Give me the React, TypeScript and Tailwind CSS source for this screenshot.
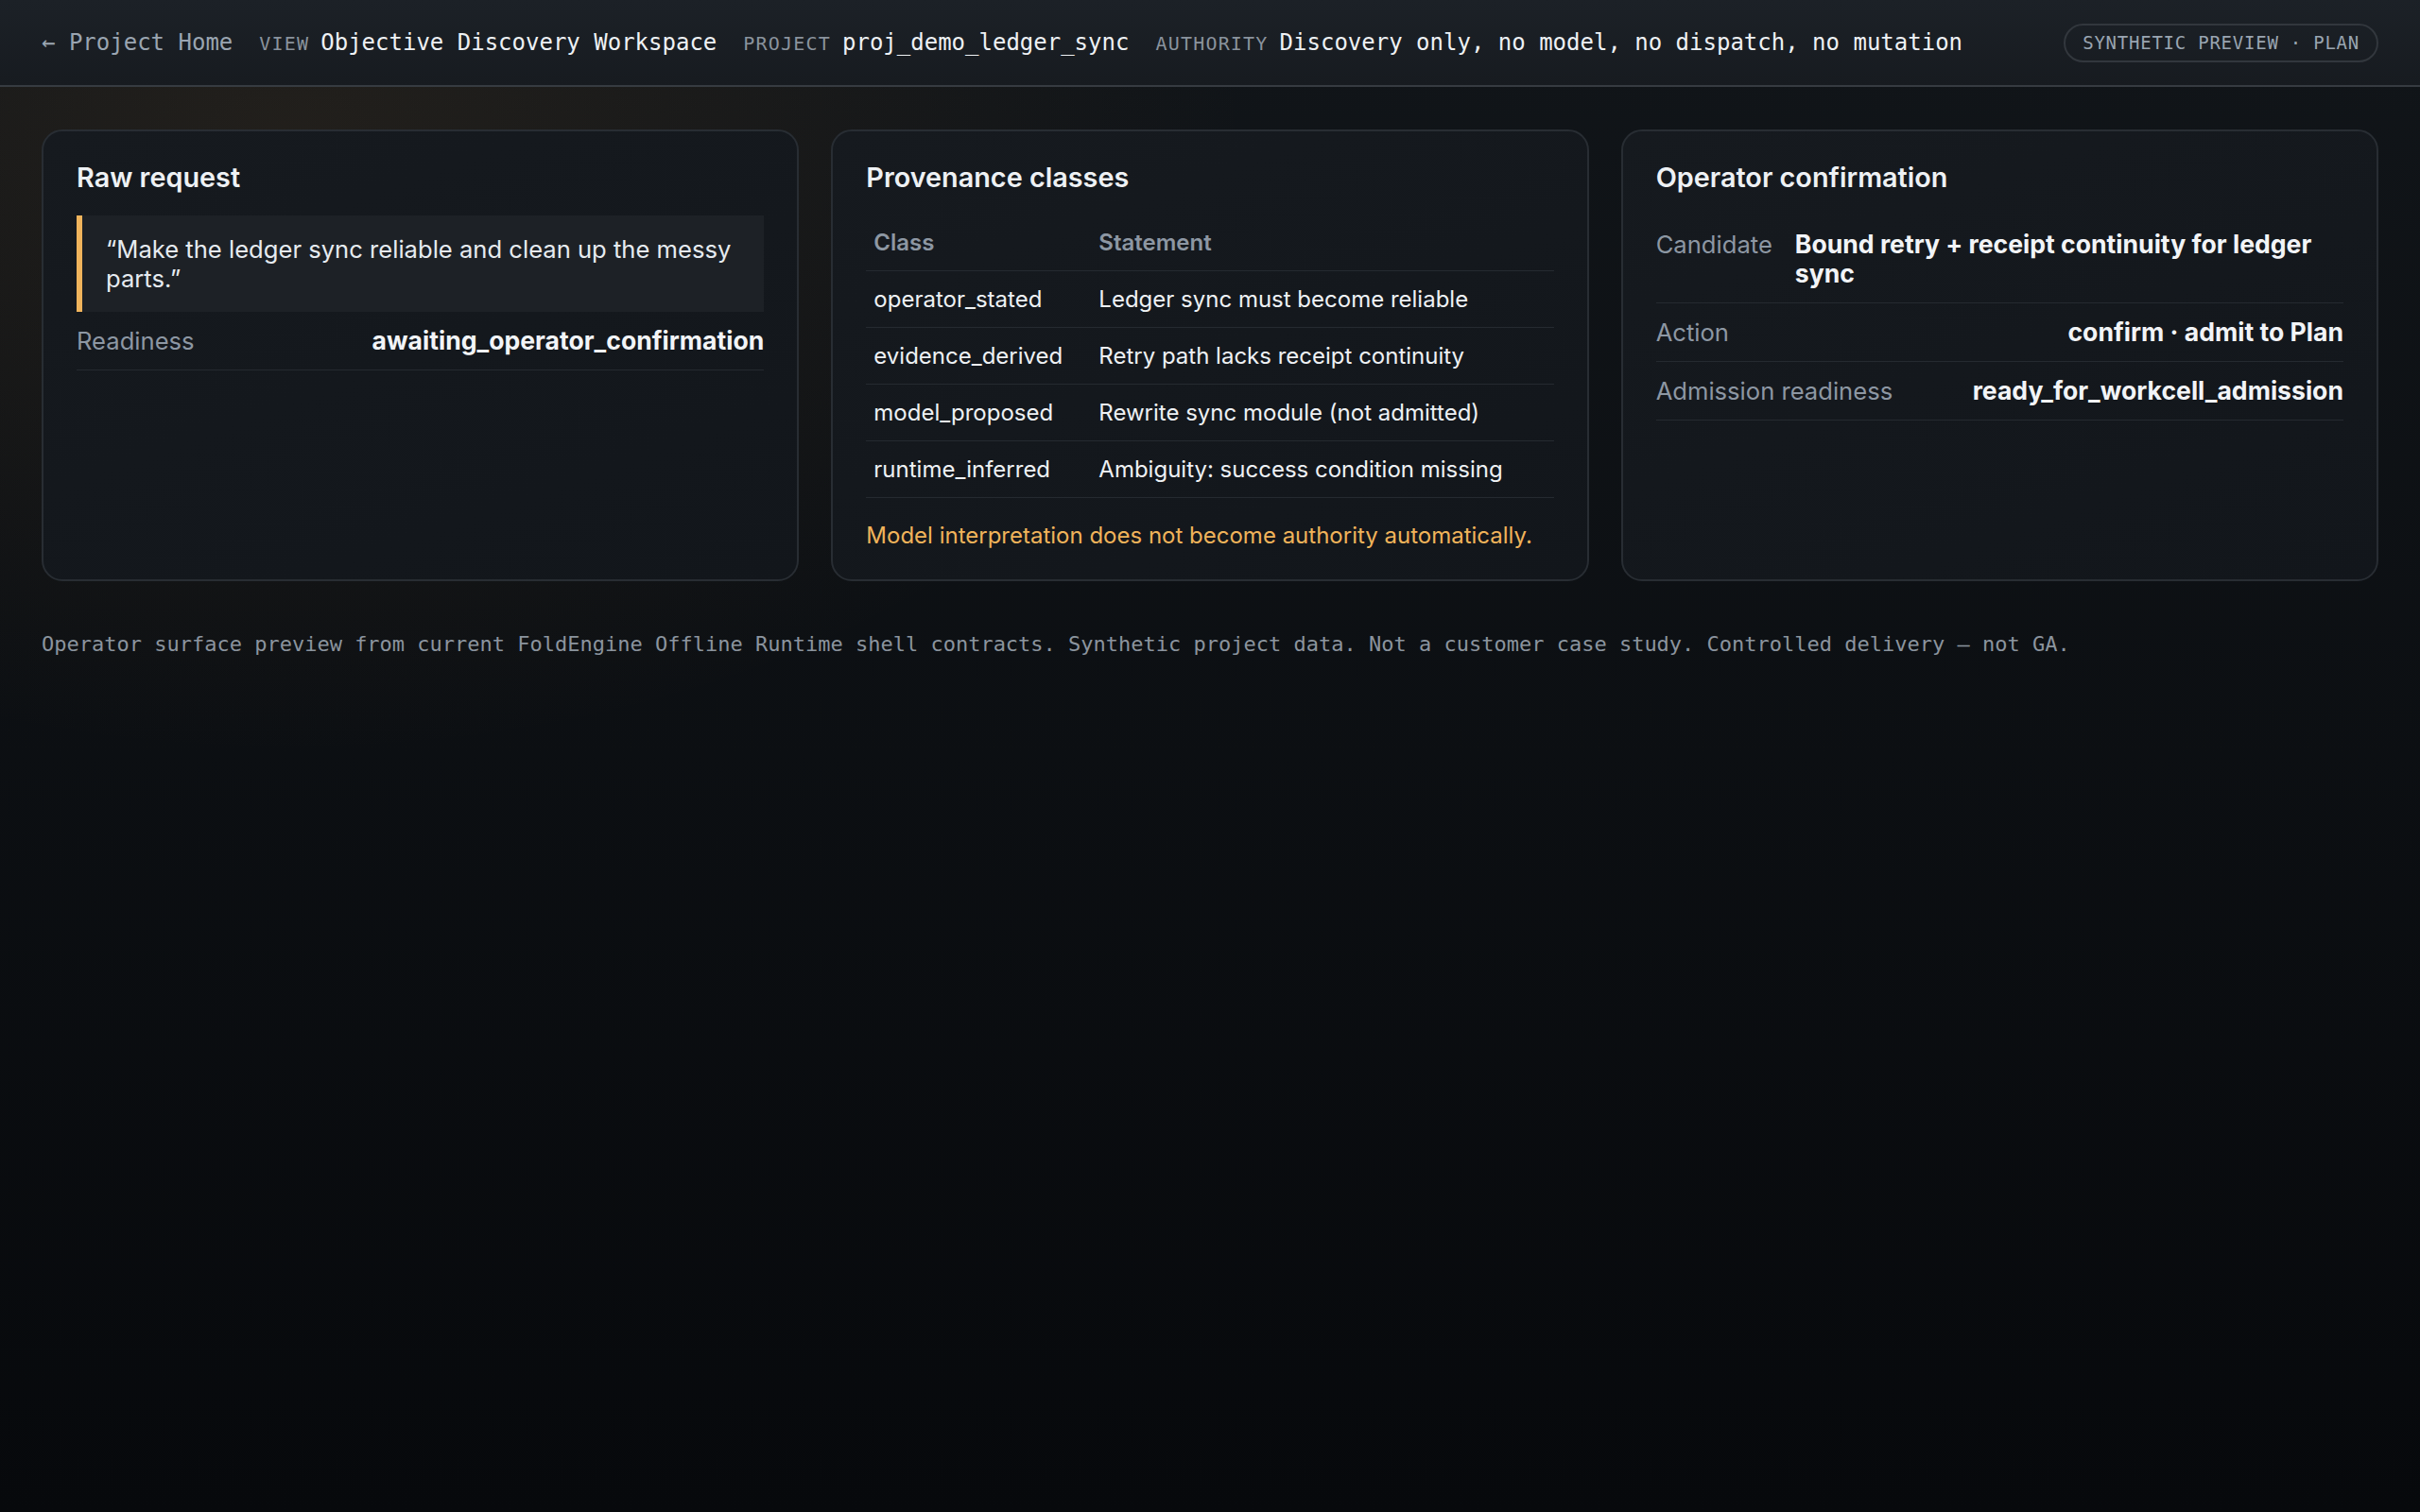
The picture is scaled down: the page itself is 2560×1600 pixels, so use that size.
import type { ReactNode } from 'react';

const mono = 'font-["DejaVu_Sans_Mono","Liberation_Mono",monospace]';
const sans = 'font-["Inter","Noto_Sans",sans-serif]';

type Provenance = { cls: string; statement: string };

const provenance: Provenance[] = [
  { cls: 'operator_stated', statement: 'Ledger sync must become reliable' },
  { cls: 'evidence_derived', statement: 'Retry path lacks receipt continuity' },
  { cls: 'model_proposed', statement: 'Rewrite sync module (not admitted)' },
  { cls: 'runtime_inferred', statement: 'Ambiguity: success condition missing' },
];

function Card({ title, children }: { title: string; children: ReactNode }) {
  return (
    <section className="rounded-[22px] border-2 border-[#282d33] bg-[linear-gradient(160deg,#161a1f,#12161b)] px-[35px] pt-[31px] pb-[30px]">
      <h2 className="mb-[22px] text-[28.8px] leading-[36px] font-semibold text-[#eef1f4]">{title}</h2>
      {children}
    </section>
  );
}

/* label on the left, value pushed right; long values wrap left-aligned */
function Row({ label, value }: { label: string; value: string }) {
  return (
    <div className="flex items-start justify-between gap-[24px] border-b border-[#252a30] py-[15px] text-[25.6px] leading-[31px]">
      <span className="shrink-0 text-[#8d97a3]">{label}</span>
      <span className="text-[26.6px] font-bold text-[#f2f4f7]">{value}</span>
    </div>
  );
}

function HeaderField({ label, value }: { label: string; value: string }) {
  return (
    <div className="flex items-baseline gap-[12px]">
      <span className="text-[20px] tracking-[0.06em] text-[#8a939d]">{label}</span>
      <span className="text-[24px] text-[#eef1f4]">{value}</span>
    </div>
  );
}

export default function App() {
  return (
    <div
      className={`min-h-screen ${sans} bg-[radial-gradient(ellipse_at_12%_9%,rgba(190,130,60,0.10),transparent_32%),linear-gradient(180deg,#111519,#07090c)] text-[#e6edf3]`}
    >
      <header
        className={`flex h-[92px] items-center gap-[28px] border-b-2 border-[#363b41] bg-[linear-gradient(180deg,#1c2127,#171b20)] px-[44px] ${mono}`}
      >
        <a href="#" className="text-[24px] text-[#9aa5b1]">
          ← Project Home
        </a>
        <HeaderField label="VIEW" value="Objective Discovery Workspace" />
        <HeaderField label="PROJECT" value="proj_demo_ledger_sync" />
        <HeaderField label="AUTHORITY" value="Discovery only, no model, no dispatch, no mutation" />
        <span className="ml-auto flex h-[41px] items-center rounded-full border-2 border-[#32373d] px-[18px] text-[19px] tracking-[0.04em] text-[#9aa5b1]">
          SYNTHETIC PREVIEW · PLAN
        </span>
      </header>

      <main className="px-[44px] pt-[45px]">
        <div className="grid grid-cols-3 gap-[34px]">
          <Card title="Raw request">
            <blockquote className="border-l-[6px] border-[#f0b45c] bg-[#1d2126] py-[20px] pr-[24px] pl-[25px] text-[25.6px] leading-[31px] text-[#e6ebf0]">
              “Make the ledger sync reliable and clean up the messy parts.”
            </blockquote>
            <Row label="Readiness" value="awaiting_operator_confirmation" />
          </Card>

          <Card title="Provenance classes">
            <table className="w-full border-collapse text-left">
              <thead>
                <tr className="border-b border-[#252a30]">
                  <th className="w-[238px] px-[8px] py-[12px] text-[24px] leading-[34px] font-semibold text-[#8d97a3]">Class</th>
                  <th className="px-[8px] py-[12px] text-[24px] leading-[34px] font-semibold text-[#8d97a3]">Statement</th>
                </tr>
              </thead>
              <tbody>
                {provenance.map((p) => (
                  <tr key={p.cls} className="border-b border-[#252a30]">
                    <td className="px-[8px] py-[12px] text-[24px] leading-[35px] text-[#eef1f4]">{p.cls}</td>
                    <td className="px-[8px] py-[12px] text-[24px] leading-[35px] text-[#eef1f4]">{p.statement}</td>
                  </tr>
                ))}
              </tbody>
            </table>
            <p className="mt-[24px] text-[24px] leading-[32px] text-[#f0b35a]">
              Model interpretation does not become authority automatically.
            </p>
          </Card>

          <Card title="Operator confirmation">
            <Row label="Candidate" value="Bound retry + receipt continuity for ledger sync" />
            <Row label="Action" value="confirm · admit to Plan" />
            <Row label="Admission readiness" value="ready_for_workcell_admission" />
          </Card>
        </div>

        <p className={`mt-[50px] text-[22px] leading-[33px] text-[#8b949e] ${mono}`}>
          Operator surface preview from current FoldEngine Offline Runtime shell contracts. Synthetic project data. Not a customer case study. Controlled delivery — not GA.
        </p>
      </main>
    </div>
  );
}
